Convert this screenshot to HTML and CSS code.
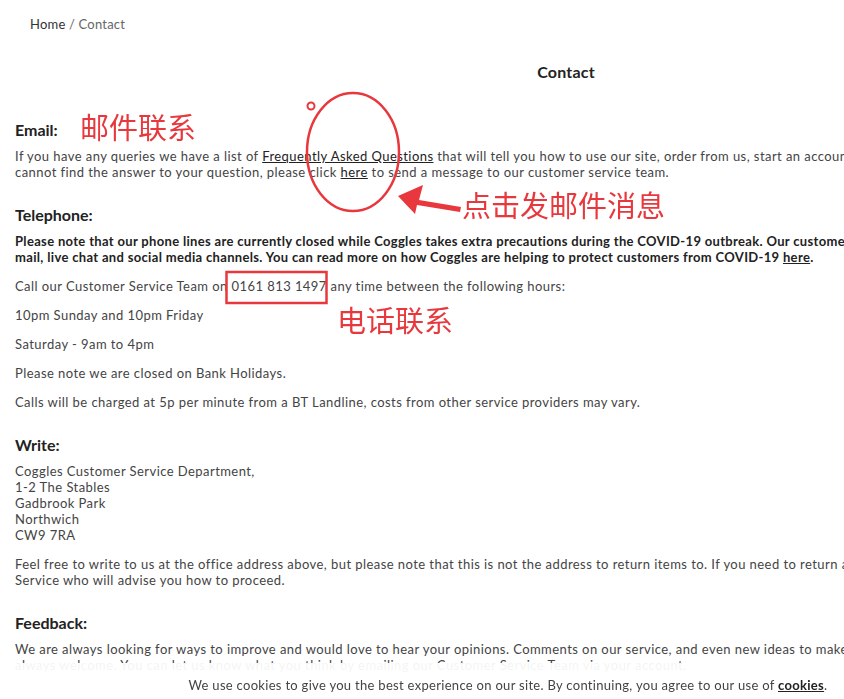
FILE: index.html
```html
<!DOCTYPE html>
<html lang="en">
<head>
    <meta charset="UTF-8">
    <title>Contact</title>
    <link rel="stylesheet" href="styles.css">
</head>
<body>
    <div class="page">
        <div class="breadcrumb"><a href="#">Home</a> / Contact</div>
        <h1>Contact</h1>

        <div class="section">
            <h2>Email:</h2>
            <p>If you have any queries we have a list of <a href="#">Frequently Asked Questions</a> that will tell you how to use our site, order from us, start an account and more. If you<br>cannot find the answer to your question, please click <a href="#">here</a> to send a message to our customer service team.</p>
        </div>

        <div class="section">
            <h2>Telephone:</h2>
            <p class="notice">Please note that our phone lines are currently closed while Coggles takes extra precautions during the COVID-19 outbreak. Our customer service team are available via e-<br>mail, live chat and social media channels. You can read more on how Coggles are helping to protect customers from COVID-19 <a href="#">here</a>.</p>
            <p>Call our Customer Service Team on 0161 813 1497 any time between the following hours:</p>
            <p>10pm Sunday and 10pm Friday</p>
            <p>Saturday - 9am to 4pm</p>
            <p>Please note we are closed on Bank Holidays.</p>
            <p>Calls will be charged at 5p per minute from a BT Landline, costs from other service providers may vary.</p>
        </div>

        <div class="section">
            <h2>Write:</h2>
            <p>Coggles Customer Service Department,<br>1-2 The Stables<br>Gadbrook Park<br>Northwich<br>CW9 7RA</p>
            <p>Feel free to write to us at the office address above, but please note that this is not the address to return items to. If you need to return a product, please contact Customer<br>Service who will advise you how to proceed.</p>
        </div>

        <div class="section">
            <h2>Feedback:</h2>
            <p>We are always looking for ways to improve and would love to hear your opinions. Comments on our service, and even new ideas to make our site better are<br>always welcome. You can let us know what you think by emailing our Customer Service Team via your account.</p>
        </div>
    </div>

    <div class="cookie-bar">We use cookies to give you the best experience on our site. By continuing, you agree to our use of <a href="#">cookies</a>.</div>

    <!-- annotations drawn over the screenshot -->
    <svg class="marks" width="844" height="699" viewBox="0 0 844 699">
        <ellipse cx="353" cy="152" rx="46" ry="59" fill="none" stroke="#e8383d" stroke-width="2.5"/>
        <circle cx="311" cy="106" r="3.5" fill="none" stroke="#e8383d" stroke-width="2"/>
        <polygon points="398,196 423,185 419,200 461,207 460,212 417,205 415,214" fill="#e8383d"/>
        <rect x="226.5" y="272" width="100" height="31" fill="none" stroke="#e8383d" stroke-width="2.5"/>
    </svg>
    <span class="note note-email">邮件联系</span>
    <span class="note note-click">点击发邮件消息</span>
    <span class="note note-phone">电话联系</span>
</body>
</html>
```

FILE: styles.css
```css
body {
    margin: 0;
    font-family: 'Lato', 'Noto Sans', sans-serif;
    font-size: 13px;
    color: #444;
    background-color: white;
    overflow: hidden;
}
a {
    color: #222;
}
.page {
    width: 1132px;
    padding: 0 15px;
    box-sizing: border-box;
}
.breadcrumb {
    padding: 16px 0 0 15px;
    line-height: 16px;
    color: #666;
    letter-spacing: 0.2px;
}
.breadcrumb a {
    text-decoration: none;
    color: #333;
}
h1 {
    margin: 30px 0 38px;
    font-size: 16px;
    line-height: 20px;
    font-weight: 700;
    color: #222;
    text-align: center;
    letter-spacing: 0.2px;
}
h2 {
    margin: 25px 0 8px;
    font-size: 16px;
    line-height: 20px;
    font-weight: 700;
    color: #222;
}
p {
    margin: 0 0 13px;
    line-height: 16px;
    white-space: nowrap;
    letter-spacing: 0.44px;
}
.notice {
    font-weight: 700;
    color: #222;
    letter-spacing: 0.33px;
}
.cookie-bar {
    position: fixed;
    left: 0;
    bottom: 0;
    width: 1016px;
    padding: 14px 0 6px;
    background-color: rgba(255, 255, 255, 0.94);
    text-align: center;
    line-height: 16px;
    letter-spacing: 0.3px;
}
.cookie-bar a {
    font-weight: 700;
}
/* red annotations */
.marks {
    position: absolute;
    top: 0;
    left: 0;
}
.note {
    position: absolute;
    font-family: 'Noto Sans CJK SC', sans-serif;
    font-size: 29px;
    line-height: 29px;
    color: #e8383d;
}
.note-email {
    left: 80px;
    top: 112px;
}
.note-click {
    left: 462px;
    top: 190px;
}
.note-phone {
    left: 337px;
    top: 305px;
}
```
